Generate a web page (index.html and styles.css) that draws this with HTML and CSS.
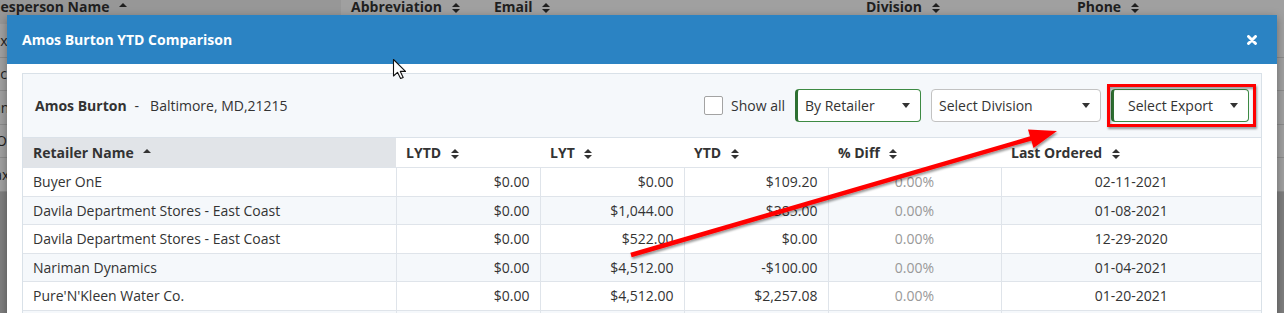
FILE: index.html
```html
<!DOCTYPE html>
<html lang="en">
<head>
  <meta charset="UTF-8" />
  <meta name="viewport" content="width=device-width, initial-scale=1.0"/>
  <title>Salespeople - YTD Comparison</title>
  <link rel="stylesheet" href="styles.css">
</head>
<body>
  <!-- page behind the modal -->
  <div class="bg-table">
    <div class="bg-grid bg-head">
      <div class="bg-cell sorted">Salesperson Name <svg class="sort" width="8" height="10" viewBox="0 0 8 10"><path d="M0 4 L4 0 L8 4 Z"/></svg></div>
      <div class="bg-cell">Abbreviation <svg class="sort" width="8" height="10" viewBox="0 0 8 10"><path d="M0 4 L4 0 L8 4 Z M0 6 L8 6 L4 10 Z"/></svg></div>
      <div class="bg-cell">Email <svg class="sort" width="8" height="10" viewBox="0 0 8 10"><path d="M0 4 L4 0 L8 4 Z M0 6 L8 6 L4 10 Z"/></svg></div>
      <div class="bg-cell">Division <svg class="sort" width="8" height="10" viewBox="0 0 8 10"><path d="M0 4 L4 0 L8 4 Z M0 6 L8 6 L4 10 Z"/></svg></div>
      <div class="bg-cell">Phone <svg class="sort" width="8" height="10" viewBox="0 0 8 10"><path d="M0 4 L4 0 L8 4 Z M0 6 L8 6 L4 10 Z"/></svg></div>
    </div>
    <div class="bg-grid bg-row"><div class="bg-cell">Alex Kamal</div><div></div><div></div><div></div><div></div></div>
    <div class="bg-grid bg-row"><div class="bg-cell">Mac Locke</div><div></div><div></div><div></div><div></div></div>
    <div class="bg-grid bg-row"><div class="bg-cell">Jonne Holden</div><div></div><div></div><div></div><div></div></div>
    <div class="bg-grid bg-row"><div class="bg-cell">Al Ortiz</div><div></div><div></div><div></div><div></div></div>
    <div class="bg-grid bg-row"><div class="bg-cell">Prax Meng</div><div></div><div></div><div></div><div></div></div>
  </div>

  <div class="modal">
    <div class="modal-header">
      <h3 class="modal-title">Amos Burton YTD Comparison</h3>
      <svg class="close" width="10" height="10" viewBox="0 0 10 10">
        <path d="M1.5 1.5 L8.5 8.5 M8.5 1.5 L1.5 8.5" stroke="#fff" stroke-width="2.9" stroke-linecap="round"/>
      </svg>
    </div>

    <div class="modal-body">
      <div class="panel">
        <div class="toolbar">
          <div class="who"><b>Amos Burton</b><span class="sep">-</span>Baltimore, MD,21215</div>
          <div class="tools">
            <label class="check"><span class="box"></span>Show all</label>
            <div class="select green retailer"><span>By Retailer</span><i class="caret"></i></div>
            <div class="select division"><span>Select Division</span><i class="caret"></i></div>
            <div class="select green export"><span>Select Export</span><i class="caret"></i></div>
          </div>
        </div>

        <table class="grid">
          <colgroup>
            <col class="c-name"><col class="c-money"><col class="c-money"><col class="c-money"><col class="c-pct"><col>
          </colgroup>
          <thead>
            <tr>
              <th class="sorted">Retailer Name <svg class="sort" width="8" height="10" viewBox="0 0 8 10"><path d="M0 4 L4 0 L8 4 Z"/></svg></th>
              <th>LYTD <svg class="sort" width="8" height="10" viewBox="0 0 8 10"><path d="M0 4 L4 0 L8 4 Z M0 6 L8 6 L4 10 Z"/></svg></th>
              <th>LYT <svg class="sort" width="8" height="10" viewBox="0 0 8 10"><path d="M0 4 L4 0 L8 4 Z M0 6 L8 6 L4 10 Z"/></svg></th>
              <th>YTD <svg class="sort" width="8" height="10" viewBox="0 0 8 10"><path d="M0 4 L4 0 L8 4 Z M0 6 L8 6 L4 10 Z"/></svg></th>
              <th>% Diff <svg class="sort" width="8" height="10" viewBox="0 0 8 10"><path d="M0 4 L4 0 L8 4 Z M0 6 L8 6 L4 10 Z"/></svg></th>
              <th>Last Ordered <svg class="sort" width="8" height="10" viewBox="0 0 8 10"><path d="M0 4 L4 0 L8 4 Z M0 6 L8 6 L4 10 Z"/></svg></th>
            </tr>
          </thead>
          <tbody>
            <tr><td>Buyer OnE</td><td class="num">$0.00</td><td class="num">$0.00</td><td class="num">$109.20</td><td class="pct">0.00%</td><td class="date">02-11-2021</td></tr>
            <tr><td>Davila Department Stores - East Coast</td><td class="num">$0.00</td><td class="num">$1,044.00</td><td class="num">$385.00</td><td class="pct">0.00%</td><td class="date">01-08-2021</td></tr>
            <tr><td>Davila Department Stores - East Coast</td><td class="num">$0.00</td><td class="num">$522.00</td><td class="num">$0.00</td><td class="pct">0.00%</td><td class="date">12-29-2020</td></tr>
            <tr><td>Nariman Dynamics</td><td class="num">$0.00</td><td class="num">$4,512.00</td><td class="num">-$100.00</td><td class="pct">0.00%</td><td class="date">01-04-2021</td></tr>
            <tr><td>Pure'N'Kleen Water Co.</td><td class="num">$0.00</td><td class="num">$4,512.00</td><td class="num">$2,257.08</td><td class="pct">0.00%</td><td class="date">01-20-2021</td></tr>
            <tr><td>Rocinante Supply</td><td class="num">$0.00</td><td class="num">$0.00</td><td class="num">$0.00</td><td class="pct">0.00%</td><td class="date">01-02-2021</td></tr>
          </tbody>
        </table>
      </div>
    </div>
  </div>

  <!-- screenshot annotations -->
  <svg class="annot" width="1284" height="313" viewBox="0 0 1284 313">
    <defs>
      <filter id="shadow" x="-5%" y="-20%" width="110%" height="140%">
        <feDropShadow dx="1" dy="2" stdDeviation="1.2" flood-color="#000" flood-opacity="0.4"/>
      </filter>
    </defs>
    <g filter="url(#shadow)">
      <rect x="1108.5" y="85.5" width="146" height="40" fill="none" stroke="#f00" stroke-width="3"/>
      <line x1="631" y1="255" x2="1034" y2="137.5" stroke="#f00" stroke-width="4.5"/>
      <polygon points="1057,131 1033.5,148 1028,129.5" fill="#f00"/>
    </g>
    <path class="cursor" d="M393.5 59.5 V76 L397.5 72.3 L400.6 78.5 L403.2 77.4 L400.3 71.4 L405.5 71.4 Z"/>
  </svg>
</body>
</html>
```

FILE: styles.css
```css
body {
  margin: 0;
  padding: 0;
  font-family: 'Open Sans', 'Noto Sans', sans-serif;
  background: #7f7f7f;
  height: 313px;
  overflow: hidden;
  position: relative;
}

/* background page (dimmed by the modal backdrop) */
.bg-table {
  margin-left: -30px;
  background: #a1a1a1;
  color: #1f1f1f;
  font-size: 14px;
}

.bg-grid {
  display: grid;
  grid-template-columns: 371px 143px 372px 211px 1fr;
}

.bg-head {
  margin-top: -1px;
  height: 25px;
  line-height: 16px;
  font-weight: 700;
  background: #a0a0a0;
}

.bg-head .sorted {
  background: #979797;
}

.bg-head .sort {
  fill: #1f1f1f;
}

.bg-cell {
  padding: 0 10px;
  white-space: nowrap;
}

.bg-row {
  height: 32.5px;
  align-items: center;
  border-bottom: 1px solid #8c8c8c;
}

/* modal */
.modal {
  position: absolute;
  left: 7px;
  top: 15px;
  width: 1270px;
  height: 320px;
  background: #fff;
  box-shadow: 0 3px 9px rgba(0, 0, 0, 0.35);
}

.modal-header {
  height: 49px;
  background: #2b83c3;
  color: #fff;
  display: flex;
  align-items: center;
  justify-content: space-between;
  padding: 0 20px 0 15px;
}

.modal-title {
  margin: 0;
  font-size: 14px;
  font-weight: 700;
}

.modal-body {
  padding: 9px 15px 0;
}

.panel {
  border: 1px solid #d9e1e8;
  background: #f5f8fb;
}

.toolbar {
  display: flex;
  align-items: center;
  padding: 15px 12px;
  border-bottom: 1px solid #dbe2e9;
  font-size: 14px;
  color: #333;
}

.who b {
  font-weight: 700;
}

.sep {
  margin: 0 11px 0 8px;
}

.tools {
  margin-left: auto;
  display: flex;
  align-items: center;
  gap: 10px;
}

.check {
  display: flex;
  align-items: center;
  gap: 8px;
}

.box {
  width: 17px;
  height: 17px;
  border: 1px solid #a3a3a3;
  border-radius: 2px;
  background: #fff;
}

.select {
  box-sizing: border-box;
  height: 33px;
  display: flex;
  align-items: center;
  justify-content: space-between;
  padding: 0 10px 0 7px;
  border: 1px solid #c2c2c2;
  border-radius: 4px;
  background: #fff;
  color: #333;
}

.select.green {
  border-color: #3d8a43;
  border-left: 3px solid #2e7032;
}

.retailer {
  width: 126px;
}

.division {
  width: 170px;
}

.export {
  width: 138px;
  padding-left: 14px;
}

.caret {
  width: 0;
  height: 0;
  border-left: 4.5px solid transparent;
  border-right: 4.5px solid transparent;
  border-top: 5px solid #333;
}

/* table */
.grid {
  width: 100%;
  border-collapse: collapse;
  table-layout: fixed;
  font-size: 14px;
  color: #333;
  background: #fff;
}

.c-name {
  width: 373px;
}

.c-money {
  width: 144px;
}

.c-pct {
  width: 173px;
}

.grid th {
  height: 29px;
  padding: 0 10px;
  text-align: left;
  font-weight: 700;
  white-space: nowrap;
  background: #fff;
  border-bottom: 1px solid #dfe4ea;
}

.grid th.sorted {
  background: #e1e4e8;
}

.sort {
  margin-left: 6px;
  vertical-align: -1px;
  fill: #333;
}

.grid td {
  height: 27.5px;
  padding: 0 10px;
  border: 1px solid #dfe4ea;
  white-space: nowrap;
}

.grid td:first-child {
  border-left: none;
}

.grid td:last-child {
  border-right: none;
}

.grid tbody tr:nth-child(even) td {
  background: #f5f8fb;
}

.num {
  text-align: right;
}

.pct {
  text-align: center;
  color: #999;
}

.date {
  text-align: center;
}

/* annotations over the screenshot */
.annot {
  position: absolute;
  left: 0;
  top: 0;
  pointer-events: none;
}

.cursor {
  fill: #fff;
  stroke: #111;
  stroke-width: 1.1;
  stroke-linejoin: round;
}
```
